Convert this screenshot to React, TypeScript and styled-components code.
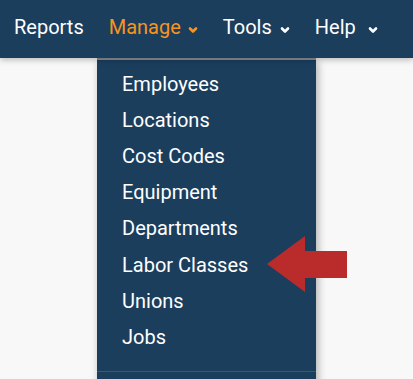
import React from 'react';
import styled, { createGlobalStyle } from 'styled-components';

const GlobalStyle = createGlobalStyle`
  html, body {
    margin: 0;
    padding: 0;
    background: #f8f8f8;
    font-family: Roboto, "Liberation Sans", Arial, sans-serif;
  }
`;

const Page = styled.div`
  position: relative;
  width: 413px;
  height: 379px;
  overflow: hidden;
  background: #f8f8f8;
`;

const NavBar = styled.nav`
  position: relative;
  z-index: 2;
  height: 58px;
  background: #1b3e5d;
  display: flex;
  align-items: center;
  padding: 0 0 4px 14px;
  box-sizing: border-box;
  box-shadow: 0 2px 6px rgba(0, 0, 0, 0.25);
`;

const NavItem = styled.div<{ $active?: boolean; $gap?: number }>`
  display: flex;
  align-items: center;
  gap: ${(p) => p.$gap ?? 7}px;
  margin-right: 25px;
  font-size: 20px;
  font-weight: 400;
  color: ${(p) => (p.$active ? '#f7941e' : '#ffffff')};
  white-space: nowrap;
`;

const Chevron = styled.svg<{ $color: string }>`
  width: 10px;
  height: 8px;
  margin-top: 6px;
  stroke: ${(p) => p.$color};
`;

const Dropdown = styled.ul`
  position: absolute;
  z-index: 1;
  top: 58px;
  left: 97px;
  width: 219px;
  height: 330px;
  margin: 0;
  padding: 6px 0 0;
  list-style: none;
  background: #1b3e5d;
  border-top: 2px solid #8a9098;
  box-sizing: border-box;
  box-shadow: 2px 4px 8px rgba(0, 0, 0, 0.3);
`;

const MenuItem = styled.li`
  height: 36.1px;
  display: flex;
  align-items: center;
  padding-left: 25px;
  font-size: 20px;
  font-weight: 400;
  color: #ffffff;
`;

const Divider = styled.li`
  margin-top: 16px;
  height: 1px;
  background: #2f5b82;
`;

const Arrow = styled.svg`
  position: absolute;
  z-index: 3;
  left: 266px;
  top: 235px;
  width: 82px;
  height: 58px;
`;

const chevron = (color: string) => (
  <Chevron $color={color} viewBox="0 0 10 8" fill="none" strokeWidth="2.6" strokeLinecap="round" strokeLinejoin="round">
    <path d="M2 2.5 L5 5.5 L8 2.5" />
  </Chevron>
);

const items = [
  'Employees',
  'Locations',
  'Cost Codes',
  'Equipment',
  'Departments',
  'Labor Classes',
  'Unions',
  'Jobs',
];

export default function App() {
  return (
    <Page>
      <GlobalStyle />
      <NavBar>
        <NavItem>Reports</NavItem>
        <NavItem $active>
          Manage
          {chevron('#f7941e')}
        </NavItem>
        <NavItem $gap={8}>
          Tools
          {chevron('#ffffff')}
        </NavItem>
        <NavItem $gap={12}>
          Help
          {chevron('#ffffff')}
        </NavItem>
      </NavBar>
      <Dropdown>
        {items.map((item) => (
          <MenuItem key={item}>{item}</MenuItem>
        ))}
        <Divider />
      </Dropdown>
      <Arrow viewBox="0 0 82 58">
        <polygon points="1,29 39,1 39,16 81,16 81,43 39,43 39,57" fill="#ba2b2b" />
      </Arrow>
    </Page>
  );
}
